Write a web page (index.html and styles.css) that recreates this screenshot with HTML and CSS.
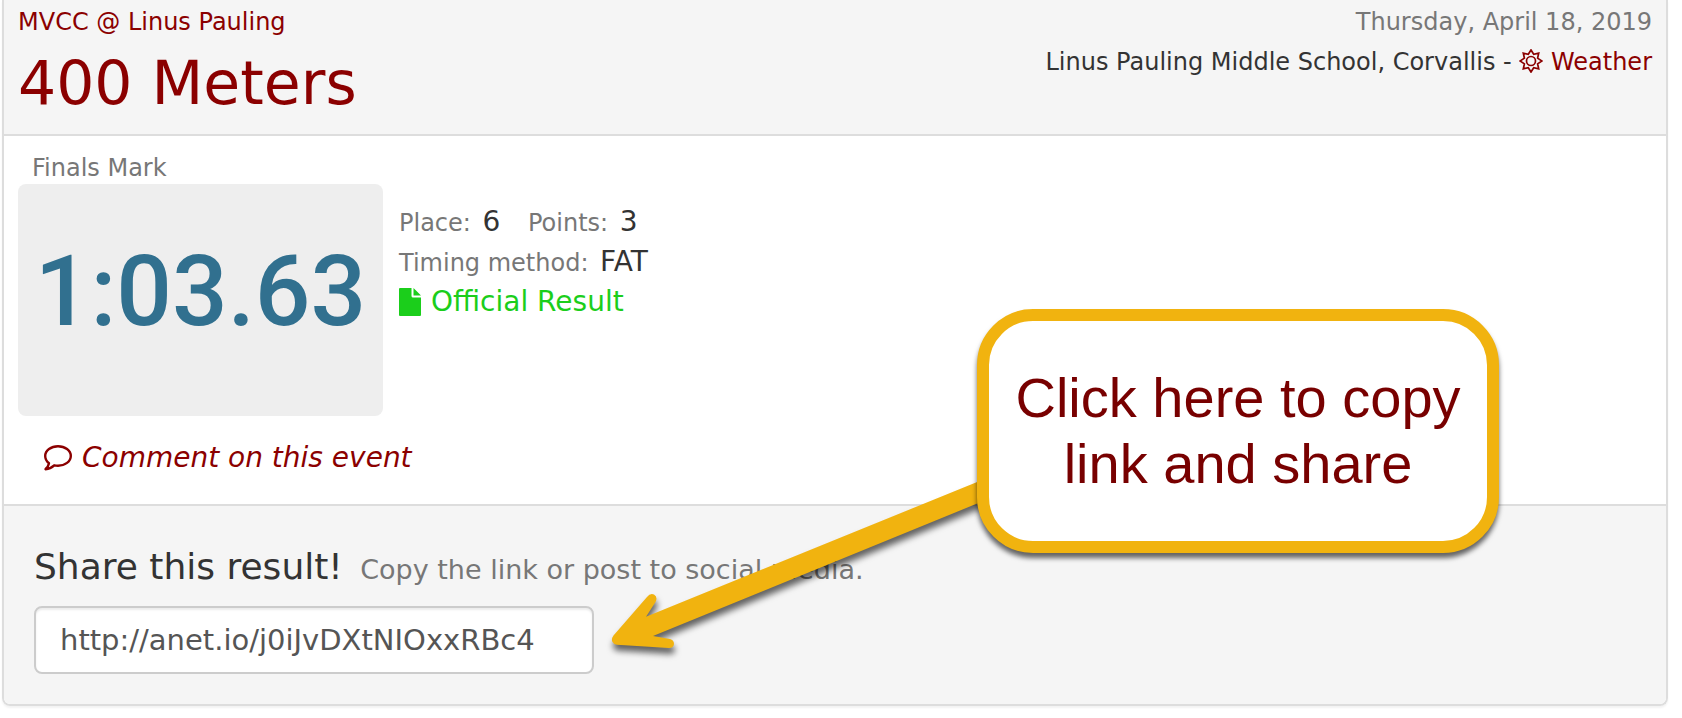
FILE: index.html
```html
<!DOCTYPE html>
<html lang="en">
<head>
    <meta charset="UTF-8">
    <meta name="viewport" content="width=device-width, initial-scale=1.0">
    <title>400 Meters - MVCC @ Linus Pauling</title>
    <link rel="stylesheet" href="styles.css">
</head>
<body>
    <main class="panel">
        <header class="panel-heading">
            <div class="event">
                <a href="#meet">MVCC @ Linus Pauling</a>
                <h1><a href="#event">400 Meters</a></h1>
            </div>
            <div class="venue">
                <div class="date">Thursday, April 18, 2019</div>
                <div>
                    Linus Pauling Middle School, Corvallis -
                    <a href="#weather"><svg class="icon-sun" viewBox="0 0 24 24" aria-hidden="true">
                        <path d="M12 1l2.700 4.300 5-1.100-1.100 5L23 12l-4.400 2.800 1.100 5-5-1.100L12 23l-2.700-4.300-5 1.100 1.100-5L1 12l4.400-2.800-1.100-5 5 1.100z"/>
                        <circle cx="12" cy="12" r="4.500"/>
                    </svg> Weather</a>
                </div>
            </div>
        </header>

        <section class="panel-body">
            <div class="mark-label">Finals Mark</div>
            <div class="result">
                <div class="mark">1:03.63</div>
                <div class="details">
                    <div><span class="place">Place: <b>6</b></span> <span>Points: <b>3</b></span></div>
                    <div>Timing method: <b>FAT</b></div>
                    <div class="official">
                        <svg class="icon-file" viewBox="0 0 22 28" aria-hidden="true">
                            <path d="M1 0H12.500V8Q12.500 9.500 14 9.500H22V27Q22 28 21 28H1Q0 28 0 27V1Q0 0 1 0zM14.500 0L22 7.500H14.500z"/>
                        </svg>
                        Official Result
                    </div>
                </div>
            </div>
            <a class="comment" href="#comment">
                <svg class="icon-comment" viewBox="0 0 28 26" aria-hidden="true">
                    <path d="M14 1.200C21 1.200 26.800 5.500 26.800 11S21 20.700 14 20.700Q12 20.700 10.200 20.300Q6.500 23.700 1.500 24.200Q4.500 21.500 5 18.300Q1.200 15.300 1.200 11C1.200 5.500 7 1.200 14 1.200z"/>
                </svg>
                <em>Comment on this event</em>
            </a>
        </section>

        <footer class="panel-footer">
            <label for="share-link">Share this result! <small>Copy the link or post to social media.</small></label>
            <input type="text" id="share-link" value="http://anet.io/j0iJvDXtNIOxxRBc4" readonly>
        </footer>
    </main>

    <!-- Hint over the share box -->
    <div class="hint">
        <svg class="hint-arrow" viewBox="0 0 400 190" aria-hidden="true">
            <path d="M377 -1L36 137.700L45.500 123Q48 118 44 115.500Q40 114 37 118L3.500 156.500Q1 160 2.500 163Q4 165.500 7 165.700L59 169Q63.500 169 64 165Q64 161 60 160L43 157L377 20.500z"/>
        </svg>
        <div class="hint-box">Click here to copy link and share</div>
    </div>
</body>
</html>
```
FILE: styles.css
```css
* {
    box-sizing: border-box;
}

body {
    margin: 0;
    font-family: Verdana, "DejaVu Sans", sans-serif;
    font-size: 24px;
    line-height: 40px;
    color: #333;
    background: #fff;
}

a {
    color: #8b0000;
    text-decoration: none;
}

/* Panel */
.panel {
    margin: 0 14px 12px 2px;
    border: 2px solid #ddd;
    border-top: none;
    border-radius: 0 0 8px 8px;
    box-shadow: 0 2px 2px rgba(0, 0, 0, 0.05);
}

.panel-heading {
    display: flex;
    justify-content: space-between;
    padding: 2px 14px 18px;
    background: #f5f5f5;
    border-bottom: 2px solid #ddd;
}

h1 {
    margin: 8px 0 0;
    font-size: 60px;
    font-weight: normal;
    line-height: 66px;
}

.venue {
    text-align: right;
}

.date {
    color: #777;
}

/* Result */
.panel-body {
    padding: 16px 14px 21px;
}

.mark-label {
    padding: 0 14px;
    line-height: 32px;
    color: #777;
}

.result {
    display: flex;
    gap: 16px;
}

.mark {
    display: flex;
    align-items: center;
    justify-content: center;
    width: 365px;
    height: 232px;
    padding-bottom: 16px;
    border-radius: 8px;
    background: #eee;
    color: #31708f;
    font-family: Roboto, sans-serif;
    font-size: 98px;
    font-weight: 500;
    line-height: 120px;
}

.details {
    padding-top: 19px;
    color: #777;
}

.details b {
    margin-left: 4px;
    font-size: 28px;
    font-weight: normal;
    line-height: 28px;
    color: #333;
}

.place {
    margin-right: 20px;
}

.details .official {
    display: flex;
    align-items: center;
    gap: 10px;
    line-height: 38px;
    font-size: 28px;
    color: #1bce1b;
}

.comment {
    display: inline-flex;
    align-items: center;
    gap: 10px;
    margin: 22px 0 0 26px;
    font-size: 28px;
}

/* Icons */
.icon-sun {
    width: 24px;
    height: 24px;
    vertical-align: -3px;
    fill: none;
    stroke: currentColor;
    stroke-width: 1.7;
}

.icon-file {
    width: 22px;
    height: 28px;
    fill: currentColor;
}

.icon-comment {
    width: 28px;
    height: 26px;
    fill: none;
    stroke: currentColor;
    stroke-width: 2.4;
    stroke-linejoin: round;
}

/* Share */
.panel-footer {
    padding: 41px 30px 30px;
    background: #f5f5f5;
    border-top: 2px solid #ddd;
    border-radius: 0 0 6px 6px;
}

.panel-footer label {
    display: block;
    margin-bottom: 16px;
    font-size: 36px;
}

.panel-footer small {
    margin-left: 6px;
    font-size: 27px;
    color: #777;
}

.panel-footer input {
    display: block;
    width: 560px;
    max-width: 100%;
    height: 68px;
    padding: 12px 24px;
    border: 2px solid #ccc;
    border-radius: 8px;
    box-shadow: inset 0 2px 2px rgba(0, 0, 0, 0.08);
    background: #fff;
    color: #555;
    font-family: inherit;
    font-size: 29px;
}

/* Hint */
.hint {
    position: absolute;
    top: 309px;
    left: 610px;
}

.hint-arrow {
    position: absolute;
    top: 170px;
    left: 0;
    width: 400px;
    height: 190px;
    overflow: visible;
    fill: #f1b30f;
    filter: drop-shadow(1px 6px 3px rgba(0, 0, 0, 0.6));
}

.hint-box {
    position: relative;
    display: flex;
    align-items: center;
    width: 522px;
    height: 244px;
    margin-left: 367px;
    padding: 0 20px;
    border: 12px solid #f1b30f;
    border-radius: 56px;
    background: #fff;
    box-shadow: 0 5px 5px rgba(0, 0, 0, 0.6);
    color: #780000;
    font-family: Arial, "Liberation Sans", sans-serif;
    font-size: 56px;
    line-height: 66px;
    text-align: center;
}
```
